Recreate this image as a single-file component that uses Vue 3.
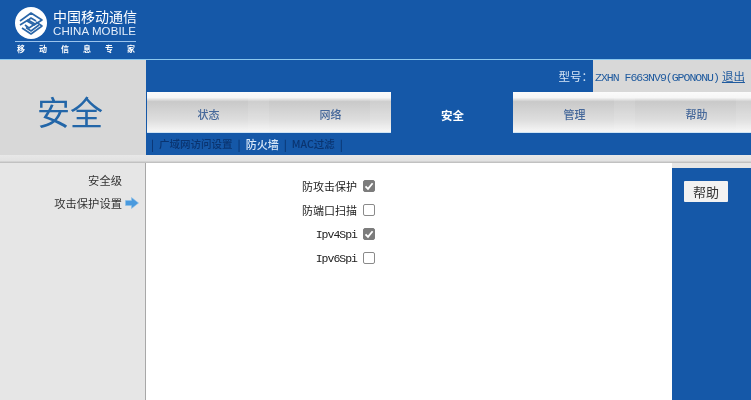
<script setup>
const subLinks = [
  { text: '广域网访问设置', on: false },
  { text: '防火墙', on: true },
  { text: 'MAC过滤', on: false }
]
const tabs = [
  { text: '状态', current: false },
  { text: '网络', current: false },
  { text: '安全', current: true },
  { text: '管理', current: false },
  { text: '帮助', current: false }
]
const options = [
  { label: '防攻击保护', checked: true },
  { label: '防端口扫描', checked: false },
  { label: 'Ipv4Spi', checked: true },
  { label: 'Ipv6Spi', checked: false }
]
const slogan = ['移', '动', '信', '息', '专', '家']
</script>

<template>
  <div class="page">
    <header class="brand">
      <div class="logo">
        <div class="logo-top">
          <svg class="mark" viewBox="0 0 32 32" width="32" height="32">
            <circle cx="16" cy="16" r="16" fill="#fff" />
            <g fill="none" stroke="#2a66a8" stroke-width="1.6" stroke-linejoin="round">
              <path d="M5 14 L16 6 L27 13 L19 18 L12 14 L16 11 L21 14" />
              <path d="M5 18 L13 13 L20 17 L14 21 L10 18" />
              <path d="M7 21 L16 27 L27 19 L21 15" />
              <path d="M11 20.5 L16 24 L24 18" />
            </g>
          </svg>
          <div class="logo-words">
            <div class="cn">中国移动通信</div>
            <div class="en">CHINA MOBILE</div>
          </div>
        </div>
        <div class="slogan"><span v-for="c in slogan" :key="c">{{ c }}</span></div>
      </div>
    </header>

    <div class="top">
      <div class="title">安全</div>
      <div class="nav">
        <div class="model-row">
          <span class="model-label">型号&#xFF1A;</span>
          <div class="model">ZXHN F663NV9(GPONONU)<a class="logout">退出</a></div>
        </div>
        <div class="tabs">
          <div v-for="t in tabs" :key="t.text" :class="['tab', { current: t.current }]">{{ t.text }}</div>
        </div>
        <div class="sub">
          <span class="bar">|</span>
          <template v-for="l in subLinks" :key="l.text">
            <span :class="['sub-link', { on: l.on }]">{{ l.text }}</span>
            <span class="bar">|</span>
          </template>
        </div>
      </div>
    </div>

    <div class="band"></div>

    <div class="body">
      <aside class="side">
        <div class="side-item">安全级</div>
        <div class="side-item active">
          攻击保护设置
          <svg class="arrow" viewBox="0 0 14 12" width="14" height="12">
            <path d="M0.5 3.5 H6.5 V0.5 L13.5 6 L6.5 11.5 V8.5 H0.5 Z" fill="#4a9ade" stroke="#8cc0ea" stroke-width="0.6" />
          </svg>
        </div>
      </aside>
      <main class="main">
        <div class="opt" v-for="o in options" :key="o.label">
          <span class="opt-label">{{ o.label }}</span>
          <span :class="['box', { checked: o.checked }]">
            <svg v-if="o.checked" viewBox="0 0 12 12" width="12" height="12">
              <path d="M2.5 6.3 L5 8.8 L9.6 3.2" fill="none" stroke="#fff" stroke-width="1.8" />
            </svg>
          </span>
        </div>
      </main>
      <div class="help-col">
        <button class="help" type="button">帮助</button>
      </div>
    </div>
  </div>
</template>

<style>
html, body { margin: 0; background: #fff; overflow: hidden; }
</style>

<style scoped>
.page {
  width: 751px;
  height: 400px;
  overflow: hidden;
  display: flex;
  flex-direction: column;
  font-family: "Noto Sans CJK SC", "Liberation Sans", sans-serif;
  font-size: 11px;
  color: #333;
  background: #e6e6e6;
  filter: blur(0.35px);
}
.brand {
  height: 60px;
  flex: none;
  box-sizing: border-box;
  background: #1558a8;
  border-bottom: 1px solid #8cc8ee;
  padding: 7px 0 0 15px;
}
.logo { width: 121px; color: #fff; }
.logo-top { display: flex; align-items: flex-start; gap: 6px; height: 34px; }
.mark { flex: none; }
.logo-words { display: flex; flex-direction: column; padding-top: 2px; }
.cn { font-size: 14px; line-height: 15px; white-space: nowrap; }
.en { font-family: "Liberation Sans", sans-serif; font-size: 11.5px; line-height: 11px; margin-top: 2px; letter-spacing: 0.1px; white-space: nowrap; color: #e4eefa; }
.slogan {
  border-top: 1px solid #9cc4ec;
  display: flex;
  justify-content: space-between;
  padding: 1px 1px 0 2px;
  font-size: 8px;
  line-height: 12px;
  font-weight: 700;
}
.top { display: flex; height: 95px; flex: none; }
.title {
  width: 146px;
  flex: none;
  background: #d8d8d8;
  color: #2366a8;
  font-size: 33px;
  line-height: 40px;
  text-align: center;
  padding: 31px 6px 0 0;
  box-sizing: border-box;
}
.nav { flex: 1; min-width: 0; overflow: hidden; display: flex; flex-direction: column; background: #1558a8; }
.model-row { height: 32px; display: flex; justify-content: flex-end; flex: none; }
.model-label { align-self: center; color: #d6e6f6; font-size: 11.5px; white-space: nowrap; }
.model {
  width: 158px;
  box-sizing: border-box;
  background: #d8d8d8;
  color: #1f5a9e;
  font-family: "Liberation Mono", monospace;
  font-size: 11.5px;
  letter-spacing: -1px;
  line-height: 32px;
  padding-left: 2px;
  white-space: nowrap;
}
.logout { text-decoration: underline; font-family: "Noto Sans CJK SC", sans-serif; font-size: 11.5px; letter-spacing: 0; margin-left: 3px; }
.tabs { display: flex; height: 41px; flex: none; margin-left: 1px; font-size: 11px; }
.tab {
  position: relative;
  width: 122px;
  flex: none;
  box-sizing: border-box;
  padding: 4px 0 0 1px;
  background: linear-gradient(#fbfbfb 0, #f6f6f6 14%, #c9c9c9 24%, #dedede 70%, #f4f4f4 97%);
  color: #46689a;
  font-weight: 500;
  display: flex;
  align-items: center;
  justify-content: center;
  border-bottom: 1px solid #cfe4f4;
}
.tab::after {
  content: "";
  position: absolute;
  top: 6px;
  right: 0;
  bottom: 0;
  width: 21px;
  background: rgba(255, 255, 255, 0.1);
}
.tab.current { background: #1558a8; color: #fff; font-weight: 700; border: 0; font-size: 11.5px; }
.tab.current::after { display: none; }
.sub {
  height: 22px;
  flex: none;
  display: flex;
  align-items: center;
  gap: 5px;
  padding: 0 0 1px 5px;
  box-sizing: border-box;
  color: #0a3470;
  font-size: 10.5px;
  font-weight: 500;
  white-space: nowrap;
}
.bar { font-size: 11px; }
.sub-link.on { color: #d8e8f8; font-size: 11px; }
.band {
  height: 8px;
  flex: none;
  background: linear-gradient(#e8e8e8, #e2e2e2 70%, #b8b8b8);
}
.body { flex: 1; min-height: 0; display: flex; }
.side {
  width: 146px;
  flex: none;
  box-sizing: border-box;
  padding: 6px 23px 0 0;
  background: #e6e6e6;
  border-right: 1px solid #a8a8a8;
  color: #333;
}
.side-item { position: relative; text-align: right; line-height: 23px; font-size: 11.3px; white-space: nowrap; }
.arrow { position: absolute; right: -17px; top: 5px; }
.main {
  flex: 1;
  min-width: 0;
  background: #fff;
  padding-top: 11px;
  display: flex;
  flex-direction: column;
}
.opt {
  height: 24px;
  display: flex;
  align-items: center;
  justify-content: flex-end;
  width: 229px;
  gap: 6px;
}
.opt-label { font-family: "Liberation Mono", "Noto Sans CJK SC", monospace; font-size: 11.5px; letter-spacing: -1px; color: #222; white-space: nowrap; }
.opt:nth-child(-n+2) .opt-label { font-family: "Noto Sans CJK SC", sans-serif; font-size: 11px; letter-spacing: 0; }
.box {
  width: 12px;
  height: 12px;
  box-sizing: border-box;
  border: 1px solid #8a8a8a;
  border-radius: 2px;
  background: #fff;
  flex: none;
  position: relative;
}
.box.checked { background: #7c7c7c; border-color: #7c7c7c; }
.box svg { position: absolute; left: -1px; top: -1px; }
.help-col {
  width: 79px;
  flex: none;
  background: #1558a8;
  margin-top: 5px;
  padding: 13px 0 0 12px;
  box-sizing: border-box;
}
.help {
  display: block;
  width: 44px;
  height: 21px;
  padding: 0;
  border: 0;
  border-radius: 1px;
  background: #f2f2f2;
  color: #333;
  font-family: "Noto Sans CJK SC", sans-serif;
  font-size: 13px;
  line-height: 21px;
}
</style>
